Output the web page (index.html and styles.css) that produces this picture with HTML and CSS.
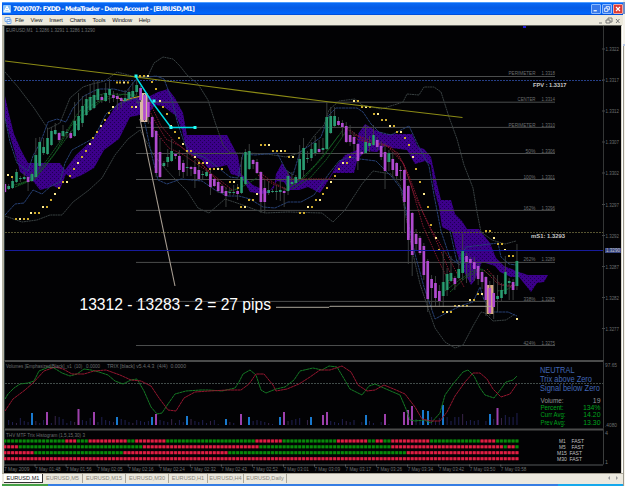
FILE: index.html
```html
<!DOCTYPE html>
<html lang="en">
<head>
<meta charset="utf-8">
<title>MetaTrader</title>
<link rel="stylesheet" href="styles.css">
</head>
<body>
<div class="window">
  <header class="titlebar">
    <svg class="app-icon" viewBox="0 0 9 9"><rect width="9" height="9" rx="1" fill="#8cc4f8"/><path d="M1.5 7 4.5 1.5 7.5 7ZM3 5h3" fill="none" stroke="#fff" stroke-width="1.2"/></svg>
    <svg class="title-text" viewBox="0 0 184 11"><text x="0" y="8" textLength="182">7000707: FXDD - MetaTrader - Demo Account - [EURUSD,M1]</text></svg>
    <div class="controls">
      <svg class="ctl" viewBox="0 0 10 10"><path d="M2 7.2h4" stroke="#fff" stroke-width="1.5"/></svg>
      <svg class="ctl" viewBox="0 0 10 10"><path d="M4 4V2h4v4H6M2 4h4v4H2Z" fill="none" stroke="#fff"/></svg>
      <svg class="ctl close" viewBox="0 0 10 10"><path d="M2.5 2.5l5 5m0-5l-5 5" stroke="#fff" stroke-width="1.4"/></svg>
    </div>
  </header>
  <nav class="menubar">
    <svg class="doc-icon" viewBox="0 0 8 8"><path d="M1 1.5h5v4H1zM3 3.5h4v4H3z" fill="#e7f1ff" stroke="#78a9e5"/></svg>
    <span>File</span><span>View</span><span>Insert</span><span>Charts</span><span>Tools</span><span>Window</span><span>Help</span>
    <svg class="mdi" viewBox="0 0 26 9"><path d="M2 7h3M11 4V2h4v4h-2M9 4h4v3H9ZM19 3l3.5 4m0-4L19 7" fill="none" stroke="#777"/></svg>
  </nav>
  <main class="charts">
    <svg id="price" class="price" viewBox="4 26 617 334"></svg>
    <svg id="volume" class="volume" viewBox="4 360 617 68"></svg>
    <svg id="trix" class="trix" viewBox="4 428 617 44"></svg>
  </main>
  <footer class="tabs">
    <span class="tab active">EURUSD,M1</span><span class="tab">EURUSD,M5</span><span class="tab">EURUSD,M15</span><span class="tab">EURUSD,M30</span><span class="tab h1">EURUSD,H1</span><span class="tab h4">EURUSD,H4</span><span class="tab daily">EURUSD,Daily</span>
    <svg class="tab-arrows" viewBox="0 0 12 6"><path d="M3 1 1 3l2 2ZM9 1l2 2-2 2Z" fill="#999"/></svg>
  </footer>
  <div class="taskbar"><i class="start"></i><i class="tray"></i></div>
</div>
<aside class="edge"><i class="edge-top"></i><i class="edge-mark"></i><i class="edge-line"></i></aside>
<script src="chart.js"></script>
</body>
</html>
```
FILE: styles.css
```css
* { box-sizing: border-box; }
body { display: flex; margin: 0; width: 625px; height: 486px; overflow: hidden; background: #fff; font-family: "Liberation Sans", Arial, sans-serif; }
svg { display: block; flex: none; }
.window { flex: none; display: flex; flex-direction: column; width: 623px; height: 486px; padding: 2px 0 0 2px; }
.edge { display: flex; flex-direction: column; width: 2px; height: 486px; padding-top: 2px; background: #f4f2ea; }
.edge-top { height: 12px; background: #6d8fc9; }
.edge-mark { height: 2px; margin-top: 30px; background: #b9c9e6; }
.edge-line { flex: 1; width: 1px; background: #9c998d; }
.titlebar { flex: none; display: flex; align-items: center; width: 621px; height: 13px; padding-left: 1px; border-top: 1px solid #4c9cff; border-bottom: 1px solid #0050dc; background: linear-gradient(#0768f5, #055be5 45%, #0068ff); }
.app-icon { width: 8px; height: 8px; margin-right: 2px; }
.title-text { width: 184px; height: 11px; font-family: "DejaVu Sans", sans-serif; font-size: 6.4px; font-weight: bold; fill: #fff; }
.controls { display: flex; gap: 1px; margin-left: auto; }
.ctl { width: 10px; height: 10px; border: 1px solid #8cbcff; border-radius: 1px; background: #3979e9; }
.close { background: #dc3c38; border-color: #f5a79d; }
.menubar { flex: none; display: flex; align-items: center; width: 621px; height: 10px; padding-left: 2px; background: #ece9dc; color: #222; font-size: 5.8px; }
.doc-icon { width: 8px; height: 8px; margin-right: 3px; }
.menubar span { margin-right: 6.8px; letter-spacing: -0.15px; }
.mdi { width: 26px; height: 9px; margin-left: auto; }
.charts { flex: none; display: flex; flex-direction: column; width: 620px; height: 448px; border-top: 1px solid #62645f; border-left: 2px solid #b4b2a4; border-right: 1px solid #d8d5c8; background: #020204; }
.charts svg { width: 617px; }
.price { height: 334px; }
.volume { height: 68px; }
.trix { height: 45px; }
.charts text { font-family: "Liberation Sans", Arial, sans-serif; font-size: 5.4px; fill: #6c6f70; }
.charts text.note { font-size: 15.6px; fill: #fff; }
.charts text.pivot { font-size: 6.2px; font-weight: bold; fill: #c8c8c8; }
.charts text.state { font-size: 8.2px; fill: #4166b4; }
.charts text.stat { font-size: 6.9px; fill: #00a21c; }
.charts text.plain { fill: #959595; }
.charts text.frame { font-size: 5.4px; fill: #c0c0c0; }
.tabs { flex: none; display: flex; align-items: stretch; width: 621px; height: 11px; padding-left: 2px; border-top: 1px solid #aaa598; background: #ece9df; color: #8b877b; font-size: 5.6px; line-height: 8px; }
.tab { width: 43px; height: 9px; text-align: center; border-right: 1px solid #aaa699; white-space: nowrap; }
.tab.active { width: 39px; color: #222; background: #fff; border-right-color: #333; border-bottom: 1px solid #333; }
.tab.h1 { width: 39px; }
.tab.h4 { width: 36px; }
.tab.daily { width: 43px; }
.tab:nth-child(2) { width: 40px; }
.tab-arrows { width: 12px; height: 6px; margin: 1px 4px 0 auto; }
.taskbar { flex: 1; display: flex; justify-content: space-between; background: #367de3; }
.start { width: 46px; background: #45a047; }
.tray { width: 65px; background: #15a8ec; }
```
FILE: chart.js
```js
const step = 3.88, first = 4.8;
const put = (id, s) => { document.getElementById(id).innerHTML = s; };
const text = (x, y, s, w, cls = '', anchor = 'start') =>
  `<text x="${x}" y="${y}" class="${cls}" text-anchor="${anchor}"${w ? ` textLength="${w}" lengthAdjust="spacingAndGlyphs"` : ''}>${s}</text>`;
const line = (p, c, w = 1, dash = '', o = 1) =>
  `<polyline points="${p}" fill="none" stroke="${c}" stroke-width="${w}" stroke-dasharray="${dash}" opacity="${o}"/>`;
const rect = (x, y, w, h, c) => `<rect x="${x}" y="${y}" width="${w}" height="${h}" fill="${c}"/>`;

/* price pane */
let s = `<defs><pattern id="weave" width="4" height="4" patternUnits="userSpaceOnUse"><rect width="4" height="4" fill="#3c008a"/><rect width="1" height="1" fill="#1d0050"/><rect x="2" y="2" width="1" height="1" fill="#1d0050"/></pattern></defs>`;
[
  '5,96 8,110 14,134 21,150 28,163 60,163 65,170 76,155 92,140 105,122 117,104 130,97 150,96 158,92 168,89 175,98 183,113 187,135 227,135 238,156 241,174 253,185 268,192 274,188 276,174 282,163 288,173 293,180 328,180 336,166 345,155 357,150 358,134 365,124 373,129 384,134 412,134 418,147 424,149 431,157 437,184 441,200 451,200 455,214 462,221 467,229 479,229 490,243 496,258 504,266 519,272 528,275 548,275 544,282 537,283 531,292 519,277 511,277 500,272 495,266 482,262 475,280 471,285 462,268 456,250 452,232 442,227 439,207 434,189 431,165 425,161 415,164 407,150 392,148 385,146 377,152 365,151 357,161 354,173 333,173 328,181 320,193 308,187 299,190 289,190 284,182 277,181 268,193 261,194 250,192 241,177 231,174 227,165 219,167 208,168 202,160 187,153 182,130 176,116 163,106 155,105 149,113 130,117 119,139 104,150 94,168 82,175 72,179 66,174 60,189 53,186 48,188 40,190 33,181 20,172 15,153 9,133 5,119'
].forEach(p => { s += `<polygon points="${p}" fill="url(#weave)"/>`; });

[[76.5,136],[102.2,136],[127.4,136],[153.5,136],[179.5,136],[210.4,136],[262.4,136],[301.4,136],[345.5,136]].forEach(([y, x]) => {
  s += line(`${x},${y} 555,${y}`, '#4b4d4d', 1);
});
s += line('5,80.5 603,80.5', '#263f87', 1, '2 1') + line('5,232.5 603,232.5', '#565331', 1, '2 1');

const gray = ['5,72 18,87 34,108 48,129 60,123 70,98 83,87 92,84 105,81 117,72 136,77 148,76 154,63 163,57 173,59 180,66 187,75 198,84 208,100 215,122 223,145 230,153 248,153 267,154 286,157 296,154 304,150 314,136 324,125 329,110 339,101 355,99 362,105 372,107 381,109 397,104 403,102 407,94 419,95 424,87 434,87 441,92 449,117 457,139 464,165 473,188 477,212 481,232 492,240 505,244 516,241',
  '5,216 22,222 37,220 50,215 62,215 73,202 89,190 102,178 115,155 128,139 140,130 153,154 162,165 173,177 187,191 198,208 209,213 225,199 240,204 256,210 265,213 288,212 322,213 333,222 345,210 362,184 373,171 391,174 400,185 407,222 413,254 420,284 428,308 435,328 445,342 455,348 463,345 473,326 481,312 485,313 493,321 506,320 515,314'];
gray.forEach(p => { s += line(p, '#384041', 1, '2 .5'); });
['5,118 10,142 17,163 28,171 33,156 41,141 48,122 57,119 66,122 73,108 84,96 98,89 114,89 126,92 137,78 149,77 156,76 164,79 172,100 177,121 184,142 190,153 204,157 216,166 230,177 238,178 243,154 255,155 277,153 286,170 293,175 300,152 309,146 321,137 329,115 336,108 357,108 363,112 371,124 379,132 391,135 409,126 418,145 429,166 434,195 441,231 450,258 460,265',
 '5,215 15,204 24,203 33,190 42,194 51,186 60,182 65,163 72,150 83,144 94,138 106,114 119,104 130,100 136,98 143,114 151,152 158,180 167,184 181,179 202,181 215,190 227,196 239,196 250,199 263,207 275,208 288,202 301,202 314,195 328,175 339,161 350,157 360,159 376,161 392,177 402,190 408,221 415,254 424,287 435,319 450,311 463,305 473,302 480,287 484,300 492,312 508,312 517,316',
 '450,231 457,262 466,247 490,244 498,243 501,257 509,264 516,265'].forEach(p => { s += line(p, '#263f72', 1, '3 .5'); });

['11,186 31,180 47,160 62,139 76,116 90,98 106,93', '15,187 35,179 54,155 71,126 88,107 113,94 137,95', '18,185 35,178 59,148 83,116 101,101 124,94 142,97', '223,193 240,188 257,178', '286,190 301,179 316,164 330,147 343,130', '292,189 310,178 326,160 341,139 348,128', '285,190 305,177 323,157 339,135', '445,291 458,281 471,272 481,268', '450,292 465,278 482,269 491,276', '497,291 506,290 517,284'].forEach(p => { s += line(p, '#145a21', 1, '2 .5'); });
['141,98 146,115 155,131 169,148 184,155 207,171 227,189', '145,102 155,121 166,139 180,146 201,164 222,185', '150,103 161,126 175,142 196,158 212,174 235,192', '258,175 273,184 288,190', '259,172 274,183 286,189', '345,126 357,139 369,143 387,146 403,163 411,185 423,226 436,255 450,284', '350,130 365,141 383,144 398,153 409,176 423,213 440,249 456,287', '355,135 378,143 391,147 404,164 414,194 431,229 450,260 464,287', '484,270 498,284 515,286', '487,269 501,285 513,287', '288,179 334,179'].forEach(p => { s += line(p, '#851830', 1, '1.5 1'); });
s += line('117,97 124,101 132,98 142,96', '#c9ac12', 1);

/* wick top, body top, body bottom, wick bottom, direction (1 up) */
const candles = `182,184,192,193,0 184,186,189,190,1 178,181,188,189,1 169,172,182,183,1 176,178,179,182,1 172,177,179,180,1 176,177,182,191,0 172,174,181,182,1 138,155,177,178,1 137,142,166,169,1 138,147,153,155,1 128,138,154,155,1 127,131,145,146,1 123,130,134,135,1 132,133,140,142,0 125,131,136,137,1 129,132,133,138,1 131,133,138,139,0 102,121,136,137,1 93,116,130,131,1 96,106,123,127,1 94,99,115,116,1 84,97,110,111,1 80,95,108,109,1 80,89,100,102,1 94,97,100,103,0 83,93,101,102,1 79,89,95,103,1 91,95,98,102,0 93,96,99,110,0 97,98,101,108,0 90,98,101,102,1 88,92,99,101,1 82,91,97,98,1 76,85,92,95,1 86,88,100,102,0 94,95,120,121,0 99,102,117,124,0 116,117,137,138,0 130,131,173,177,0 138,152,177,178,0 161,163,166,167,1 149,157,162,167,1 139,151,161,162,1 153,154,156,159,0 150,156,170,176,0 160,163,172,178,0 152,167,168,176,1 166,167,169,176,0 160,167,174,188,0 160,170,179,180,0 171,174,175,179,1 170,172,176,177,1 168,174,187,195,0 178,179,186,187,0 180,182,191,193,0 185,186,193,194,0 187,191,196,207,0 188,192,193,195,1 185,192,193,195,1 184,191,194,200,0 157,177,193,194,1 149,152,184,185,1 144,151,169,170,1 159,160,164,169,0 159,162,173,174,0 171,172,202,213,0 180,188,202,213,0 181,190,193,195,1 189,191,192,193,1 185,191,192,200,1 180,190,192,201,1 187,191,193,207,0 171,176,191,195,1 172,182,184,186,1 175,177,183,185,1 145,159,179,180,1 138,148,170,177,1 151,158,159,163,1 142,149,158,161,1 136,143,153,156,1 140,149,152,154,0 138,148,150,153,1 102,117,149,150,1 107,116,133,134,1 107,116,126,127,1 117,121,125,126,0 120,123,127,136,0 122,126,142,143,0 125,135,142,146,0 132,137,144,151,0 143,144,161,170,0 151,152,154,155,0 125,142,153,154,1 136,143,146,152,1 125,135,145,146,1 137,140,147,150,0 141,146,157,160,0 143,152,171,189,0 150,153,162,171,1 152,159,170,177,0 162,163,176,180,0 166,170,171,181,0 169,170,202,233,0 185,186,240,264,0 212,213,255,276,0 229,234,244,250,0 236,238,253,255,0 243,246,275,280,0 259,261,299,312,0 275,279,288,310,0 276,283,298,306,0 285,291,301,306,0 251,282,296,307,1 268,274,290,296,1 256,273,281,282,1 276,278,284,290,0 261,269,278,279,1 234,250,273,280,1 253,256,262,283,0 257,259,263,282,0 257,262,269,281,0 264,266,279,285,0 270,272,282,289,0 276,277,300,316,0 281,288,313,316,0 275,293,307,319,0 275,296,299,312,1 283,290,298,302,1 256,272,294,295,1 278,281,283,300,1 279,282,290,300,0 244,261,286,290,1`.split(' ').map(c => c.split(',').map(Number));
s += rect(140, 93, 7.5, 29, '#d9b7a3') + rect(486.5, 285, 7.5, 29, '#d9aa82');
candles.forEach(([a, b, c, d, up], i) => {
  const x = first + i * step;
  s += line(`${x},${a} ${x},${d}`, '#3f4443', 0.9);
  s += rect((x - 1.35).toFixed(2), b, 2.7, c - b, up ? '#2c9c75' : '#b04bcf');
  if (up && c - b > 4) s += rect((x - 1.35).toFixed(2), b, .8, c - b, '#19794c');
});

const dots = [[8,175],[12,177],[16,219],[20,219],[24,219],[28,219],[31,213],[35,213],[39,213],[43,207],[47,207],[51,200],[55,194],[59,188],[63,182],[67,182],[70,176],[74,169],[78,163],[82,157],[86,151],[90,144],[93,138],[97,132],[101,126],[105,120],[109,113],[113,107],[117,82.5],[120,82.5],[124,82.5],[128,82.5],[132,107],[136,107],[140,76],[144,76],[148,76],[152,82],[156,89],[160,101],[163,107],[167,114],[171,126],[175,132],[179,138],[183,144],[187,151],[191,151],[195,157],[199,163],[203,163],[207,163],[210,169],[214,169],[218,169],[222,169],[230,182],[234,182],[238,188],[241,207],[245,207],[249,200],[253,200],[257,194],[261,145],[265,145],[269,145],[273,151],[277,151],[281,151],[285,151],[289,157],[293,157],[300,213],[304,213],[308,207],[312,207],[316,200],[320,200],[323,194],[327,188],[331,182],[335,176],[339,169],[343,163],[347,163],[350,157],[354,101],[358,101],[362,107],[366,107],[370,107],[374,114],[378,114],[382,120],[386,120],[390,126],[394,126],[397,132],[401,132],[405,138],[409,145],[413,157],[416,169],[420,182],[424,194],[428,207],[431,225],[436,238],[439,250],[443,312],[447,312],[451,312],[455,306],[459,306],[463,306],[467,306],[470,300],[474,300],[478,294],[482,294],[486,231],[490,231],[494,238],[498,244],[502,244],[505,250],[509,256],[513,256],[517,319]];
dots.forEach(([x, y], i) => { s += rect(x - 1, y - 1, 2, 2, i % 3 ? '#cfac2e' : '#ffeb91'); });

s += line('5,61 136,77 205,86 330,102 462.5,117.5', '#8c8b16', 1.2);
s += line('140,119 175,286', '#a69c91', 1.1) + line('276,307.3 329,307.3 330,306.3 491,306.3', '#aaa69a', 1);
s += line('136,77 152,102 171,127.5 195,127.5', '#00dce4', 1.4);
[[136,76],[154,101],[171,127.5],[195,127.5]].forEach(([x, y]) => { s += rect(x - 1.5, y - 1.5, 3, 3, '#24fff5'); });
s += line('5,250.5 603,250.5', '#171b9b', 1.2);
s += line('603.5,26 603.5,361', '#343636') + line('4.5,26 4.5,361', '#303b3b', 1);
s += rect(523, 26, 3, 2, '#1b18d0');
s += rect(605, 248, 16, 5, '#394783') + text(606, 252.2, '1.3290', 14, 'frame');
s += text(6, 32.2, 'EURUSD,M1&#160; 1.3286 1.3291 1.3286 1.3290', 89);
[[75,'PERIMETER','1.3318'],[101,'CENTER','1.3314'],[127,'PERIMETER','1.3310'],[152.5,'50%','1.3306'],[178.5,'100%','1.3301'],[209.5,'162%','1.3296'],[261,'262%','1.3289'],[300.5,'338%','1.3282'],[344.5,'424%','1.3275']].forEach(([y, a, b]) => {
  s += text(535.5, y, a, a.length > 6 ? 27 : a.length > 4 ? 18 : a.length === 4 ? 12 : 10, '', 'end') + text(541.5, y, b, 13.5);
});
[[51,'1.3322'],[82,'1.3317'],[113,'1.3312'],[144,'1.3307'],[175,'1.3302'],[206.5,'1.3297'],[237.5,'1.3292'],[268.5,'1.3287'],[299.5,'1.3282'],[330.5,'1.3277']].forEach(([y, t]) => {
  s += text(605.5, y, t, 13.5) + line(`602,${y - 2} 605,${y - 2}`, '#454747');
});
s += text(533, 86.5, 'FPV : 1.3317', 33.5, 'pivot') + text(531, 238.4, 'mS1: 1.3293', 34, 'pivot');
s += text(79.5, 309.5, '13312 - 13283 - 2 = 27 pips', 191.5, 'note');
put('price', s);

/* volume pane */
let v = rect(4, 360, 600, 2, '#4a4b4b') + line('603.5,361 603.5,428', '#3b3d3d') + line('4.5,361 4.5,428', '#303b3b') + line('5,383.5 603,383.5', '#414b49', 1, '2 1');
const bars = [0,5,3,2,7,4,3,0,4,2,5,0,2,9,8,6,2,4,3,0,5,4,7,0,3,8,5,4,3,0,6,5,3,2,5,4,3,4,0,0,5,4,3,6,2,5,3,0,6,4,3,5,2,4,5,1,0,4,3,2,0,5,0,5,4,5,4,3,2,1,0,0,4,4,5,6,7,0,5,8,0,0,6,9,4,3,2,6,4,3,5,0,3,6,4,2,0,3,2,1,0,0,0,9,0,0,6,4,5,0,8,4,7,6,8,4,8,8,11,4,5,4,5,0,4,0,6,4,7,10,8,8,12];
bars.forEach((h, i) => { v += rect(first + i * step - .5, 425 - h, 1, h, i % 5 === 3 ? '#38254a' : '#202052'); });
[[32,12],[117,8],[152,8],[187,9],[226,6],[249,8],[280,8],[311,8],[366,10],[423,15],[428,14],[443,20],[490,11]].forEach(([x, h]) => { v += rect(x - 1, 425 - h, 2, h, '#1979ce'); });
[[47,13],[78.5,16],[94,13],[156,11],[241,11],[284,13],[323,10],[327,13],[385,11],[404,13],[408,15],[412,19],[497.5,17]].forEach(([x, h]) => { v += rect(x - 1, 425 - h, 2, h, '#9d40ac'); });
v += line('5,399 8,394 14,388 20,384 28,383 34,381 39,371 49,367 54,368 62,373 70,376 77,374 84,369 91,370 99,372 108,375 115,381 123,384 131,380 137,379 144,391 151,407 157,414 162,413 168,404 175,394 186,391 201,390 208,390 222,391 235,388 239,382 243,374 250,370 256,375 261,390 266,393 276,389 285,387 294,380 300,371 313,368 322,370 329,366 337,367 343,377 350,389 362,395 369,386 375,384 386,389 400,395 406,409 410,420 415,421 424,420 431,423 440,413 445,395 453,384 463,372 468,370 474,376 480,388 485,395 494,398 501,389 506,382 513,380 517,376', '#157a25', 1, '3 .3');
v += line('5,411 13,399 25,390 33,383 44,371 55,367 63,369 72,374 84,374 94,371 106,370 120,375 131,380 141,381 151,386 159,398 168,410 176,411 184,398 195,392 209,391 228,390 241,390 249,384 256,374 264,374 273,385 276,391 287,389 299,384 310,377 320,370 330,370 342,366 351,372 358,385 367,391 375,390 384,385 396,390 405,394 415,407 422,419 431,421 440,421 447,412 455,396 465,382 473,373 480,373 487,379 493,389 501,397 510,394 517,384', '#94162f', 1, '3 .3');
v += text(6, 367.8, 'Volumes [Emphasized/Black]_v1&#160; (10)&#160;&#160; 0.0000', 94) + text(107, 367.8, 'TRIX [black] v5.4.4.3&#160; (4/4)&#160; 0.0000', 79);
v += text(605, 366.5, '97.65', 12) + text(605, 426.5, '.4080', 12);
v += text(540, 372.8, 'NEUTRAL', 34.5, 'state') + text(540, 382.2, 'Trix above Zero', 52, 'state') + text(540, 391.4, 'Signal below Zero', 60, 'state');
[[402.7,'Volume:','19',23],[410,'Percent:','134%',23],[417.3,'Curr Avg:','14.20',25],[424.7,'Prev Avg:','13.30',25]].forEach(([y, a, b, w], i) => {
  const c = i ? 'stat' : 'stat plain';
  v += text(540.5, y, a, w, c) + text(600.5, y, b, 0, c, 'end');
});
put('volume', v);

/* multi-timeframe pane: run ends alternate between the two states */
let t = rect(4, 428, 600, 2, '#4a4b4b') + line('603.5,428 603.5,464', '#3b3d3d') + line('4.5,428 4.5,464', '#303b3b') + line('4,464.5 603,464.5', '#55585a') + text(6, 436, 'THV MTF Trix Histogram (1,5,15,30) 3', 79);
[[440.5, 1, [65,76,87,126,134,166,255,282,336,368,375,382,390,430,480,496,519]],[446.3, 0, [18,142,258,390,503,507,515,519]],[452.2, 0, [33,122,227,405,519]],[458.2, 0, [519]]].forEach(([y, state, ends]) => {
  for (let i = 0; i < 133; i++) {
    const x = first + i * step;
    const k = ends.findIndex(e => x < e);
    const green = (k % 2 === 0) === Boolean(state);
    t += rect((x - 1.94).toFixed(2), y - 1.5, 3.88, 3, green ? '#023c04' : '#5e0b1c');
    t += rect((x - 1.4).toFixed(2), y - 1.5, 2.8, 3, green ? '#08880b' : '#e01f44');
  }
});
[['M1',559],['M5',559],['M15',557],['M30',557]].forEach(([m, x], i) => {
  t += text(x, 442.4 + i * 5.9, m, m.length * 3.3, 'frame') + text(x + 12.5, 442.4 + i * 5.9, 'FAST', 12.5, 'frame');
});
['7 May 2009','7 May 01:48','7 May 01:56','7 May 02:05','7 May 02:16','7 May 02:24','7 May 02:32','7 May 02:43','7 May 02:52','7 May 03:01','7 May 03:09','7 May 03:17','7 May 03:26','7 May 03:34','7 May 03:42','7 May 03:50','7 May 03:58'].forEach((d, i) => {
  const x = 4 + i * 31.05;
  t += text(x, 470.5, d, 25.5) + line(`${x},464 ${x},466`, '#606262');
});
t += text(605, 434.5, '4', 3) + text(605, 463.5, '1', 3);
put('trix', t);
```
